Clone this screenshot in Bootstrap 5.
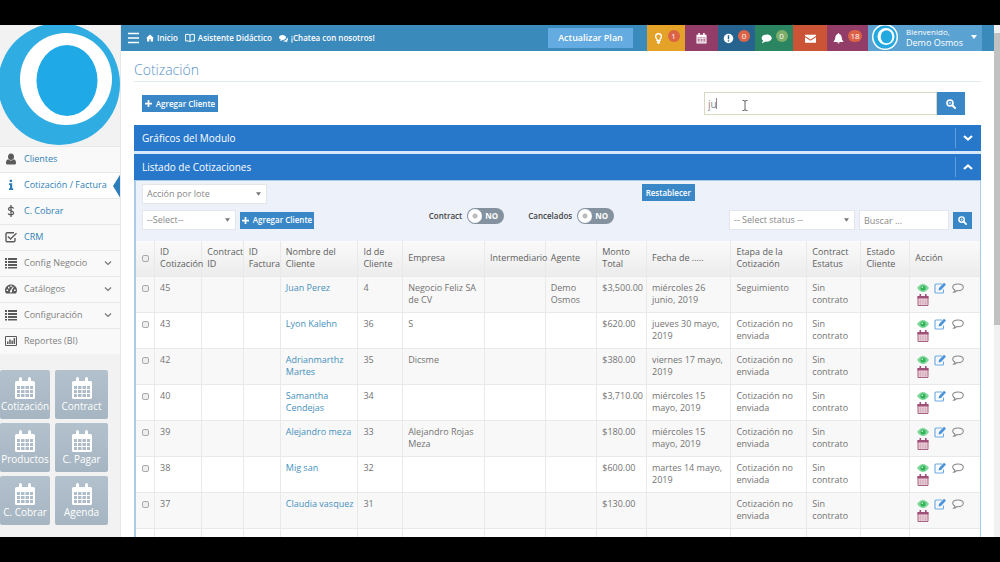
<!DOCTYPE html>
<html lang="es">
<head>
<meta charset="utf-8">
<meta name="viewport" content="width=device-width, initial-scale=1">
<title>Cotización</title>
<link href="https://cdn.jsdelivr.net/npm/bootstrap@5.3.0/dist/css/bootstrap.min.css" rel="stylesheet">
<style>
body{font-family:"Open Sans","Noto Sans",sans-serif;font-size:9px;line-height:12px;color:#737373;background:#000}
a{text-decoration:none;color:#4590bd}
svg{display:block;flex:none}
.ic{width:12px;height:12px;fill:currentColor}
.screen{height:100vh;padding:25px 0}
.side{width:121px;background:#f2f2f2;border-right:1px solid #e6e6e6}
.logo-box{height:121px;overflow:hidden}
.logo-box svg{width:121px;height:121px}
.menu-item{height:26px;padding:0 8px 2px 5px;gap:7px;background:#f9f9f9;border-top:1px solid #e8e8e8;color:#808080}
.menu-item .ic{color:#5a5a5a}
.menu-item.main-link{color:#2f7fb8}
.menu-item.active{background:#fff;position:relative}
.menu-item.active .ic{color:#2b7dbc}
.menu-item.active::after{content:"";position:absolute;right:-1px;top:0;border:13px solid transparent;border-right:8px solid #2b7dbc;border-left:0}
.tiles{display:grid;grid-template-columns:50px 53px;gap:4px 5px;margin-top:16px}
.tile{height:49px;background:linear-gradient(#b3c1cd,#a5b5c1);border-radius:2px;color:#fff;font-size:10px;line-height:14px;white-space:nowrap}
.tile svg{width:20px;height:22px;fill:#fff}
.topbar{height:26px;background:#3b8abc;color:#fff;font-size:8px;font-weight:600}
.topbar a{color:#fff}
.top-link{gap:3px;margin-right:7px}
.burger{margin:0 7px}
.plan{background:#63abe0;height:20px;width:85px;color:#fff;border:0;border-radius:0;padding:0;font-size:9px;font-weight:600;margin-right:14px}
.note{height:26px;border:0;color:#fff;padding:0;gap:4px}
.note .ic{width:11px;height:11px}
.pill{min-width:12px;height:12px;border-radius:6px;font-size:8px;line-height:12px;padding:0 2px;background:#dc6245;color:#fff;margin-top:-4px}
.user{height:26px;width:114px;background:#5aa2d2;padding:0 8px 2px 4px;gap:8px;margin-right:12px}
.user .who{font-size:9px;font-weight:400;line-height:12px}
.user .who small{font-size:8px;display:block;line-height:11px}
.content-pad{padding:0 13px}
.page-title{font-size:14px;font-weight:300;line-height:18px;color:#5a94c8;margin:0;padding:10px 0 2px;border-bottom:1px solid #e2eaee;height:31px}
.btn-blue{background:#3a87c8;color:#fff;border:0;border-radius:0;font-size:8px;font-weight:600;line-height:12px;padding:0;height:17px;display:flex;align-items:center;justify-content:center;white-space:nowrap}
.btn-blue:hover{background:#2f78b8;color:#fff}
.actions{padding:10px 16px 10px 8px;height:43px}
.find{width:261px;position:relative}
.find input{height:23px;border:1px solid #d9d8c0;border-radius:0;font-size:10px;line-height:12px;padding:0 3px;color:#888;min-width:0}
.find .btn-blue{width:28px;height:23px;flex:none}
.pointer{position:absolute;left:38px;top:8px}
.caret-bar{position:absolute;left:12px;top:6px;width:1px;height:11px;background:#888}
.bar{height:26px;background:#2778cb;color:#fff;padding:0 8px}
.bar h2{font-size:10px;line-height:14px;font-weight:500;margin:0}
.bar button{background:none;border:0;border-left:1px solid #5c9ee0;color:#fff;height:20px;padding:0 0 0 7px}
.panel-gap{height:3px;background:#d5e9fa}
.panel-body{border:solid #a9cbe8;border-width:1px 1px 0 2px;background:#edf1f9}
.filters{padding:3px 8px 10px 6px;height:60px}
.fld{height:20px;border:1px solid #e3e5ea;border-radius:0;font-size:9px;line-height:12px;padding:0 4px;color:#888;background-color:#fff}
.fld::placeholder{color:#888;opacity:1}
.form-select.fld{background-image:url("data:image/svg+xml,%3Csvg xmlns='http://www.w3.org/2000/svg' viewBox='0 0 6 4'%3E%3Cpath fill='%23777' d='M0 0h6L3 4z'/%3E%3C/svg%3E");background-size:5px 4px;background-position:right 5px center}
.reset{width:53px;margin-right:33.4%}
.sw{height:16px;width:37px;border-radius:8px;background:#8492a0;color:#fff;font-weight:700;font-size:8px;padding:0 6px 0 1px}
.sw input{appearance:none;width:14px;height:14px;border-radius:7px;margin:0;background:radial-gradient(#bbb 0 2px,#fff 3px)}
.sw-label{color:#444;margin-right:5px;font-size:8px;font-weight:600}
.grid-tbl{table-layout:fixed;width:100%;border-collapse:collapse;margin:0}
.grid-tbl th,.grid-tbl td{border-right:1px solid #e9e9e9;border-bottom:1px solid #e9e9e9;padding:5px 0 6px 5px;vertical-align:top;font-weight:400;height:36px}
.grid-tbl th:last-child,.grid-tbl td:last-child{border-right:0}
.grid-tbl th{vertical-align:middle;background:linear-gradient(#fafafa,#ececec);color:#606060;height:35px;padding:5px 0 5px 5px}
.grid-tbl td{background:#fff}
.grid-tbl tbody tr:nth-child(odd) td{background:#f8f8f8}
.grid-tbl input{appearance:none;display:block;width:7px;height:7px;border:1px solid #aaa;border-radius:2px;background:#eee;margin:3px 0 0 1px}
.grid-tbl th input{margin-top:0}
.acts{display:grid;grid-template-columns:17px 18px 14px;padding-left:2px}
.acts a{height:12px}
.sb{width:6px;background:#f1f1f1;padding-top:8px}
.sb div{height:292px;background:#c1c1c1}
</style>
</head>
<body>
<svg width="0" height="0" class="position-absolute" aria-hidden="true">
<symbol id="cal" viewBox="0 0 20 22"><path fill-rule="evenodd" d="M1.500 4H4V2q0-2 1.500-2T7 2v2h6V2q0-2 1.500-2T16 2v2h2.500Q20 4 20 5.500v15q0 1.500-1.500 1.500h-17Q0 22 0 20.500v-15Q0 4 1.500 4zM2 9v3h3V9zm4 0v3h3.500V9zm4.500 0v3H14V9zM15 9v3h3V9zM2 13v3h3v-3zm4 0v3h3.500v-3zm4.500 0v3H14v-3zm4.500 0v3h3v-3zM2 17v3h3v-3zm4 0v3h3.500v-3zm4.500 0v3H14v-3zm4.500 0v3h3v-3z"/></symbol>
<symbol id="list" viewBox="0 0 12 12"><path d="M0 1h2v2H0zM3 1h9v2H3zM0 4h2v2H0zM3 4h9v2H3zM0 7h2v2H0zM3 7h9v2H3zM0 10h2v1.500H0zM3 10h9v1.500H3z"/></symbol>
<symbol id="down" viewBox="0 0 8 8"><path d="M1 2.500l3 3 3-3" fill="none" stroke="#777" stroke-width="1.200"/></symbol>
<symbol id="plus" viewBox="0 0 8 8"><path d="M3 0h2v3h3v2H5v3H3V5H0V3h3z"/></symbol>
<symbol id="lens" viewBox="0 0 10 10"><circle cx="4" cy="4" r="3" fill="none" stroke="currentColor" stroke-width="1.600"/><path d="M6.300 6.300L9 9" stroke="currentColor" stroke-width="2" stroke-linecap="round" fill="none"/><path d="M2.700 4h2.600M4 2.700v2.600" stroke="currentColor" stroke-width=".6" fill="none"/></symbol>
<symbol id="eye" viewBox="0 0 12 10"><path d="M0 5q6-8 12 0-6 8-12 0z" fill="#7fd89a"/><circle cx="6" cy="5" r="2.600" fill="#35b45c"/><circle cx="5.300" cy="4.200" r=".8" fill="#dff7e5"/></symbol>
<symbol id="edit" viewBox="0 0 12 12"><path d="M8 2H2Q1 2 1 3v7q0 1 1 1h6.500q1 0 1-1V7.500" fill="none" stroke="#6aa9e4" stroke-width="1.100"/><path d="M4.500 8.500l.5-2.500L10 .8 12 2.600 7 8z" fill="#4c93d8"/></symbol>
<symbol id="talk" viewBox="0 0 12 12"><path d="M6 2c3 0 5.300 1.400 5.300 3.300S9 8.700 6 8.700q-.8 0-1.400-.1Q3.500 10 1.800 10.200q.9-.9 1-2.200Q.7 7 .7 5.300C.7 3.400 3 2 6 2z" fill="none" stroke="#888" stroke-width="1.100"/></symbol>
<symbol id="date" viewBox="0 0 12 12"><path d="M1 2.500h10v9H1z" fill="#ecd3dd" stroke="#a8607f"/><path d="M.5 2h11v2.600H.5zM2.500 0h1.600v2H2.500zM8 0h1.600v2H8z" fill="#a05076"/><path d="M3.500 5v6M6 5v6M8.500 5v6M1 7h10M1 9h10" stroke="#c999ae" stroke-width=".5"/></symbol>
</svg>
<div class="screen d-flex overflow-hidden">
<aside class="side flex-shrink-0 overflow-hidden">
<div class="logo-box"><svg viewBox="0 0 121 121"><circle cx="59" cy="59" r="61" fill="#2fade2"/><ellipse cx="66" cy="54" rx="46" ry="46" fill="#fff"/><ellipse cx="67" cy="55.500" rx="30.500" ry="35.500" fill="#1fa9e6"/></svg></div>
<nav>
<a href="#" class="menu-item main-link d-flex align-items-center"><svg class="ic" viewBox="0 0 12 12"><path d="M6 .5c2 0 3 1.500 3 3.200S8 7 6 7 3 5.400 3 3.700 4 .5 6 .5zM3.200 6.300Q6 8.800 8.800 6.300 11 6.700 11 10q0 1.500-1.500 1.500h-7Q1 11.500 1 10q0-3.300 2.200-3.700z"/></svg>Clientes</a>
<a href="#" class="menu-item main-link active d-flex align-items-center"><svg class="ic" viewBox="0 0 12 12"><path d="M4.700.8h2.400V3H4.700zM4 4.300h3.200v5h1V11H4V9.300h1V6H4z"/></svg>Cotización / Factura</a>
<a href="#" class="menu-item main-link d-flex align-items-center"><svg class="ic" viewBox="0 0 12 12"><path d="M8.700 3.500Q8 2.200 6 2.200T3.500 4q0 1.400 2.500 1.900T8.600 8Q8.500 9.800 6 9.800T3.200 8.300M6 0v12" fill="none" stroke="currentColor" stroke-width="1.300"/></svg>C. Cobrar</a>
<a href="#" class="menu-item main-link d-flex align-items-center"><svg class="ic" viewBox="0 0 12 12"><path d="M10 7v2.500q0 1.200-1.200 1.200H2.200Q1 10.700 1 9.500V3q0-1.200 1.200-1.200H9M3 5.500l2.500 2.500L11.500 2.300" fill="none" stroke="currentColor" stroke-width="1.400"/></svg>CRM</a>
<a href="#" class="menu-item d-flex align-items-center"><svg class="ic"><use href="#list"/></svg>Config Negocio<svg class="ms-auto" width="8" height="8"><use href="#down"/></svg></a>
<a href="#" class="menu-item d-flex align-items-center"><svg class="ic" viewBox="0 0 12 12"><path fill-rule="evenodd" d="M1 10.500Q0 9 0 7.200C0 4 2.700 1.500 6 1.500s6 2.500 6 5.700q0 1.800-1 3.300zM1.500 6.500v1.600h1.600V6.500zM3 3.800v1.600h1.500V3.800zM5.300 2.600V4h1.500V2.600zM9 6.500v1.600h1.600V6.500zM8 3.500L5.500 7.300Q4.500 8 5 9q1 1 2 0 .4-.8-.2-1.500L8.800 4z"/></svg>Catálogos<svg class="ms-auto" width="8" height="8"><use href="#down"/></svg></a>
<a href="#" class="menu-item d-flex align-items-center"><svg class="ic"><use href="#list"/></svg>Configuración<svg class="ms-auto" width="8" height="8"><use href="#down"/></svg></a>
<a href="#" class="menu-item d-flex align-items-center"><svg class="ic" viewBox="0 0 12 12"><path d="M.5 1.500h11v9H.5z" fill="none" stroke="currentColor"/><path d="M2 6.500h1.500V9H2zM4.200 4.500h1.500V9H4.200zM6.400 5.500h1.500V9H6.400zM8.600 3h1.500v6H8.600z"/></svg>Reportes (BI)</a>
</nav>
<div class="tiles">
<a href="#" class="tile d-flex flex-column align-items-center justify-content-center"><svg><use href="#cal"/></svg>Cotización</a>
<a href="#" class="tile d-flex flex-column align-items-center justify-content-center"><svg><use href="#cal"/></svg>Contract</a>
<a href="#" class="tile d-flex flex-column align-items-center justify-content-center"><svg><use href="#cal"/></svg>Productos</a>
<a href="#" class="tile d-flex flex-column align-items-center justify-content-center"><svg><use href="#cal"/></svg>C. Pagar</a>
<a href="#" class="tile d-flex flex-column align-items-center justify-content-center"><svg><use href="#cal"/></svg>C. Cobrar</a>
<a href="#" class="tile d-flex flex-column align-items-center justify-content-center"><svg><use href="#cal"/></svg>Agenda</a>
</div>
</aside>
<main class="flex-grow-1 bg-white overflow-hidden">
<header class="topbar d-flex align-items-center">
<a href="#" class="burger" aria-label="Menú"><svg width="11" height="12" viewBox="0 0 11 12"><path d="M0 1.500h11M0 6h11M0 10.500h11" stroke="#fff" stroke-width="1.500"/></svg></a>
<a href="#" class="top-link d-flex align-items-center"><svg width="8" height="8" viewBox="0 0 8 8" fill="#fff"><path d="M4 .5l4 3.700H7V7.500H4.700V5.200H3.300v2.300H1V4.200H0z"/></svg>Inicio</a>
<a href="#" class="top-link d-flex align-items-center"><svg width="10" height="10" viewBox="0 0 10 10"><path d="M5 2Q3.500.8.600 1.500V8Q3.500 7.500 5 8.700 6.500 7.500 9.400 8V1.500Q6.500.8 5 2zv6.500" fill="none" stroke="#fff"/></svg>Asistente Didáctico</a>
<a href="#" class="top-link d-flex align-items-center"><svg width="9" height="9" viewBox="0 0 9 9" fill="#fff"><path d="M3.500 1C5.500 1 7 2 7 3.500S5.500 6 3.500 6q-1 1-2.500 1 .8-.7.800-1.500Q0 5 0 3.500C0 2 1.500 1 3.500 1zM8 3.500Q9 4 9 5.200T8 7q0 .8.700 1.300Q7 8.300 6.300 7.500 4.500 7.500 4 7 8 6.500 8 3.500z"/></svg>¡Chatea con nosotros!</a>
<button type="button" class="plan ms-auto">Actualizar Plan</button>
<button type="button" class="note d-flex align-items-center justify-content-center" style="width:38px;background:#e4a228" aria-label="Ideas"><svg class="ic" viewBox="0 0 12 12"><path d="M6 .8q3.200.2 3.200 3.200Q9 5.500 7.800 6.700V8H4.200V6.700Q3 5.500 2.800 4 2.800 1 6 .8z" fill="none" stroke="#fff" stroke-width="1.400"/><path d="M4.300 9h3.400v1.500L6.500 12h-1L4.300 10.500z"/></svg><span class="pill">1</span></button>
<button type="button" class="note d-flex align-items-center justify-content-center" style="width:33px;background:#923c68" aria-label="Calendario"><svg class="ic" viewBox="0 0 12 12"><path fill-rule="evenodd" d="M.5 2H2.500V0h1.700v2h3.600V0h1.700v2h2v9.500H.500zM1.800 5v5.200h8.400V5z"/><path d="M1.800 6h8.400M1.800 7.700h8.400M1.800 9.500h8.400M4.500 5v5M7.500 5v5" stroke="#fff" stroke-width=".8"/></svg></button>
<button type="button" class="note d-flex align-items-center justify-content-center" style="width:37px;background:#27638f" aria-label="Avisos"><svg class="ic" viewBox="0 0 12 12"><circle cx="6" cy="6" r="5.200"/><path d="M5.200 2.500h1.600v4.300H5.200zM5.200 7.800h1.600v1.600H5.200z" fill="#27638f"/></svg><span class="pill">0</span></button>
<button type="button" class="note d-flex align-items-center justify-content-center" style="width:38px;background:#2a8560" aria-label="Mensajes"><svg class="ic" viewBox="0 0 12 12"><path d="M6.200 1.500c3 0 5.500 1.700 5.500 4s-2.500 4-5.500 4q-.8 0-1.500-.2Q3 11 .8 10.800 2 9.800 2.200 8.300.7 7.200.7 5.500c0-2.300 2.500-4 5.500-4z"/></svg><span class="pill" style="background:#7fae6a">0</span></button>
<button type="button" class="note d-flex align-items-center justify-content-center" style="width:34px;background:#cb5437" aria-label="Correo"><svg class="ic" viewBox="0 0 12 12"><path d="M0 2h12v1.200L6 7 0 3.200zM0 4.500l6 4 6-4V10.500H0z"/></svg></button>
<button type="button" class="note d-flex align-items-center justify-content-center" style="width:41px;background:#923c68" aria-label="Alertas"><svg class="ic" viewBox="0 0 12 12"><path d="M6 0q.8 0 .8 1Q9.300 1.500 9.500 5q.2 3 1.700 4v.7H.8V9Q2.300 8 2.500 5 2.700 1.500 5.200 1 5.200 0 6 0zM4.700 10.200h2.600Q7 11.500 6 11.500t-1.300-1.300z"/></svg><span class="pill">18</span></button>
<a href="#" class="user d-flex align-items-center"><svg width="26" height="26" viewBox="0 0 26 26"><circle cx="13" cy="13" r="13" fill="#fff"/><circle cx="13" cy="13" r="11.500" fill="#24a8e0"/><circle cx="14" cy="12.500" r="8.500" fill="#fff"/><ellipse cx="14.500" cy="12.800" rx="5.800" ry="6.500" fill="#24a8e0"/></svg><span class="who text-nowrap"><small>Bienvenido,</small>Demo Osmos</span><svg width="6" height="4" viewBox="0 0 6 4"><path d="M0 0h6L3 4z" fill="#fff"/></svg></a>
</header>
<div class="content-pad">
<h1 class="page-title">Cotización</h1>
<div class="actions d-flex justify-content-between align-items-center">
<button type="button" class="btn-blue gap-1" style="width:76px"><svg width="7" height="7" fill="#fff"><use href="#plus"/></svg>Agregar Cliente</button>
<div class="find d-flex"><input type="text" class="form-control" value="ju" aria-label="Buscar cliente"><button type="button" class="btn-blue" aria-label="Buscar"><svg width="10" height="10"><use href="#lens"/></svg></button><span class="caret-bar"></span><svg class="pointer" width="6" height="11" viewBox="0 0 6 11"><path d="M.5.5H2L3 1.300 4 .5h1.500M3 1v9M.5 10.500H2l1-.8 1 .8h1.500" stroke="#666" fill="none"/></svg></div>
</div>
<section class="bar d-flex align-items-center justify-content-between"><h2>Gráficos del Modulo</h2><button type="button" aria-label="Expandir"><svg width="10" height="8" viewBox="0 0 10 8"><path d="M1 2l4 3.500L9 2" fill="none" stroke="#fff" stroke-width="2.200"/></svg></button></section>
<div class="panel-gap"></div>
<section>
<div class="bar d-flex align-items-center justify-content-between"><h2>Listado de Cotizaciones</h2><button type="button" aria-label="Contraer"><svg width="10" height="8" viewBox="0 0 10 8"><path d="M1 6l4-3.500L9 6" fill="none" stroke="#fff" stroke-width="2.200"/></svg></button></div>
<div class="panel-body">
<div class="filters">
<div class="d-flex justify-content-between align-items-start mb-1"><select class="form-select fld" style="width:125px" aria-label="Acción por lote"><option>Acción por lote</option></select><button type="button" class="btn-blue reset">Restablecer</button></div>
<div class="d-flex justify-content-between align-items-center">
<div class="d-flex align-items-center gap-1"><select class="form-select fld" style="width:94px" aria-label="Tipo"><option>--Select--</option></select><button type="button" class="btn-blue" style="width:74px"><svg width="7" height="7" class="me-1" fill="#fff"><use href="#plus"/></svg>Agregar Cliente</button></div>
<div class="d-flex align-items-center mb-2"><label class="sw-label" for="s1">Contract</label><span class="sw d-flex align-items-center justify-content-between"><input type="checkbox" id="s1">NO</span><label class="sw-label ms-4" for="s2">Cancelados</label><span class="sw d-flex align-items-center justify-content-between"><input type="checkbox" id="s2">NO</span></div>
<div class="d-flex align-items-center gap-1"><select class="form-select fld" style="width:126px" aria-label="Estado"><option>-- Select status --</option></select><input type="text" class="form-control fld" style="width:90px" placeholder="Buscar ..." aria-label="Buscar en la lista"><button type="button" class="btn-blue" style="width:19px" aria-label="Buscar"><svg width="9" height="9" viewBox="0 0 10 10"><use href="#lens"/></svg></button></div>
</div>
</div>
<table class="grid-tbl">
<colgroup><col style="width:2.200%"><col style="width:5.600%"><col style="width:4.900%"><col style="width:4.400%"><col style="width:9.200%"><col style="width:5.300%"><col style="width:9.700%"><col style="width:7.200%"><col style="width:6.100%"><col style="width:5.900%"><col style="width:10%"><col style="width:9%"><col style="width:6.400%"><col style="width:5.800%"><col></colgroup>
<thead><tr><th><input type="checkbox" aria-label="Todos"></th><th>ID Cotización</th><th>Contract ID</th><th>ID Factura</th><th>Nombre del<br>Cliente</th><th>Id de Cliente</th><th>Empresa</th><th>Intermediario</th><th>Agente</th><th>Monto Total</th><th>Fecha de .....</th><th>Etapa de la<br>Cotización</th><th>Contract Estatus</th><th>Estado Cliente</th><th>Acción</th></tr></thead>
<tbody>
<tr><td><input type="checkbox" aria-label="45"></td><td>45</td><td></td><td></td><td><a href="#">Juan Perez</a></td><td>4</td><td>Negocio Feliz SA<br>de CV</td><td></td><td>Demo Osmos</td><td>$3,500.00</td><td>miércoles 26<br>junio, 2019</td><td>Seguimiento</td><td>Sin contrato</td><td></td><td><div class="acts"><a href="#" aria-label="Ver"><svg class="ic"><use href="#eye"/></svg></a><a href="#" aria-label="Editar"><svg class="ic"><use href="#edit"/></svg></a><a href="#" aria-label="Comentar"><svg class="ic"><use href="#talk"/></svg></a><a href="#" aria-label="Agendar"><svg class="ic"><use href="#date"/></svg></a></div></td></tr>
<tr><td><input type="checkbox" aria-label="43"></td><td>43</td><td></td><td></td><td><a href="#">Lyon Kalehn</a></td><td>36</td><td>S</td><td></td><td></td><td>$620.00</td><td>jueves 30 mayo,<br>2019</td><td>Cotización no<br>enviada</td><td>Sin contrato</td><td></td><td><div class="acts"><a href="#" aria-label="Ver"><svg class="ic"><use href="#eye"/></svg></a><a href="#" aria-label="Editar"><svg class="ic"><use href="#edit"/></svg></a><a href="#" aria-label="Comentar"><svg class="ic"><use href="#talk"/></svg></a><a href="#" aria-label="Agendar"><svg class="ic"><use href="#date"/></svg></a></div></td></tr>
<tr><td><input type="checkbox" aria-label="42"></td><td>42</td><td></td><td></td><td><a href="#">Adrianmarthz<br>Martes</a></td><td>35</td><td>Dicsme</td><td></td><td></td><td>$380.00</td><td>viernes 17 mayo,<br>2019</td><td>Cotización no<br>enviada</td><td>Sin contrato</td><td></td><td><div class="acts"><a href="#" aria-label="Ver"><svg class="ic"><use href="#eye"/></svg></a><a href="#" aria-label="Editar"><svg class="ic"><use href="#edit"/></svg></a><a href="#" aria-label="Comentar"><svg class="ic"><use href="#talk"/></svg></a><a href="#" aria-label="Agendar"><svg class="ic"><use href="#date"/></svg></a></div></td></tr>
<tr><td><input type="checkbox" aria-label="40"></td><td>40</td><td></td><td></td><td><a href="#">Samantha<br>Cendejas</a></td><td>34</td><td></td><td></td><td></td><td>$3,710.00</td><td>miércoles 15<br>mayo, 2019</td><td>Cotización no<br>enviada</td><td>Sin contrato</td><td></td><td><div class="acts"><a href="#" aria-label="Ver"><svg class="ic"><use href="#eye"/></svg></a><a href="#" aria-label="Editar"><svg class="ic"><use href="#edit"/></svg></a><a href="#" aria-label="Comentar"><svg class="ic"><use href="#talk"/></svg></a><a href="#" aria-label="Agendar"><svg class="ic"><use href="#date"/></svg></a></div></td></tr>
<tr><td><input type="checkbox" aria-label="39"></td><td>39</td><td></td><td></td><td><a href="#">Alejandro meza</a></td><td>33</td><td>Alejandro Rojas<br>Meza</td><td></td><td></td><td>$180.00</td><td>miércoles 15<br>mayo, 2019</td><td>Cotización no<br>enviada</td><td>Sin contrato</td><td></td><td><div class="acts"><a href="#" aria-label="Ver"><svg class="ic"><use href="#eye"/></svg></a><a href="#" aria-label="Editar"><svg class="ic"><use href="#edit"/></svg></a><a href="#" aria-label="Comentar"><svg class="ic"><use href="#talk"/></svg></a><a href="#" aria-label="Agendar"><svg class="ic"><use href="#date"/></svg></a></div></td></tr>
<tr><td><input type="checkbox" aria-label="38"></td><td>38</td><td></td><td></td><td><a href="#">Mig san</a></td><td>32</td><td></td><td></td><td></td><td>$600.00</td><td>martes 14 mayo,<br>2019</td><td>Cotización no<br>enviada</td><td>Sin contrato</td><td></td><td><div class="acts"><a href="#" aria-label="Ver"><svg class="ic"><use href="#eye"/></svg></a><a href="#" aria-label="Editar"><svg class="ic"><use href="#edit"/></svg></a><a href="#" aria-label="Comentar"><svg class="ic"><use href="#talk"/></svg></a><a href="#" aria-label="Agendar"><svg class="ic"><use href="#date"/></svg></a></div></td></tr>
<tr><td><input type="checkbox" aria-label="37"></td><td>37</td><td></td><td></td><td><a href="#">Claudia vasquez</a></td><td>31</td><td></td><td></td><td></td><td>$130.00</td><td></td><td>Cotización no<br>enviada</td><td>Sin contrato</td><td></td><td><div class="acts"><a href="#" aria-label="Ver"><svg class="ic"><use href="#eye"/></svg></a><a href="#" aria-label="Editar"><svg class="ic"><use href="#edit"/></svg></a><a href="#" aria-label="Comentar"><svg class="ic"><use href="#talk"/></svg></a><a href="#" aria-label="Agendar"><svg class="ic"><use href="#date"/></svg></a></div></td></tr>
<tr><td></td><td></td><td></td><td></td><td></td><td></td><td></td><td></td><td></td><td></td><td></td><td></td><td></td><td></td><td></td></tr>
</tbody>
</table>
</div>
</section>
</div>
</main>
<div class="sb flex-shrink-0"><div></div></div>
</div>
<script src="https://cdn.jsdelivr.net/npm/bootstrap@5.3.0/dist/js/bootstrap.bundle.min.js"></script>
</body>
</html>
